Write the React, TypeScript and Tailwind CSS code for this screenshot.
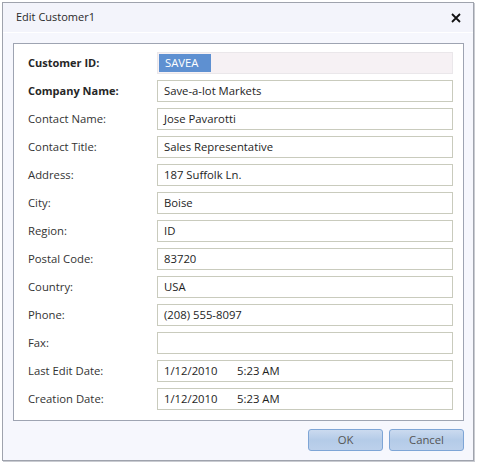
import React from "react";

const rows: { label: string; value: string; bold?: boolean; time?: string }[] = [
  { label: "Company Name:", value: "Save-a-lot Markets", bold: true },
  { label: "Contact Name:", value: "Jose Pavarotti" },
  { label: "Contact Title:", value: "Sales Representative" },
  { label: "Address:", value: "187 Suffolk Ln." },
  { label: "City:", value: "Boise" },
  { label: "Region:", value: "ID" },
  { label: "Postal Code:", value: "83720" },
  { label: "Country:", value: "USA" },
  { label: "Phone:", value: "(208) 555-8097" },
  { label: "Fax:", value: "" },
  { label: "Last Edit Date:", value: "1/12/2010", time: "5:23 AM" },
  { label: "Creation Date:", value: "1/12/2010", time: "5:23 AM" },
];

export default function App() {
  return (
    <div
      className="w-[478px] h-[466px] bg-white pt-[2px] pl-[2px] text-[11.3px] text-[#1e1e1e]"
      style={{ fontFamily: '"Open Sans", "Noto Sans", sans-serif' }}
    >
      <div className="w-[472px] h-[459px] border border-[#9fa3ad] bg-[#f6f7fd] flex flex-col shadow-[1px_1px_0_#c9cbd1]">
        <div className="h-[30px] border-b border-white bg-[#f3f4fb] flex items-center justify-between pl-[13px] pr-[12px]">
          <span className="text-[11px] text-[#2a2a2a]">Edit Customer1</span>
          <svg width="10" height="10" viewBox="0 0 10 10">
            <path d="M1 1 L9 9 M9 1 L1 9" stroke="#111" strokeWidth="1.8" fill="none" />
          </svg>
        </div>
        <div className="pl-[10px] pr-[9px] pt-[10px]">
          <div className="h-[378px] border border-[#9ea4b2] bg-white pt-[8px] pl-[14px] pr-[10px] flex flex-col gap-[6px]">
            <div className="flex items-center h-[22px]">
              <div className="w-[129px] font-bold text-[11px] text-[#262626]">Customer ID:</div>
              <div className="flex-1 h-[22px] bg-[#f6f1f4] border border-[#eae7ea] flex items-center pl-[1px]">
                <span className="bg-[#5e90d1] text-white h-[18px] w-[52px] flex items-center pl-[6px]">SAVEA</span>
              </div>
            </div>
            {rows.map((r) => (
              <div key={r.label} className="flex items-center h-[22px]">
                <div className={`w-[129px] ${r.bold ? "font-bold text-[11px] text-[#262626]" : "text-[#333]"}`}>{r.label}</div>
                <div className="flex-1 h-[22px] bg-white border border-[#c9cbbd] flex items-center pl-[6px] text-[#1e1e1e]">
                  <span className={r.time ? "w-[73px]" : ""}>{r.value}</span>
                  {r.time && <span>{r.time}</span>}
                </div>
              </div>
            ))}
          </div>
        </div>
        <div className="flex justify-end gap-[6px] pr-[9px] pt-[8px]">
          <button className="w-[75px] h-[22px] rounded-[3px] border border-[#7ea5d6] bg-gradient-to-b from-[#cbdaef] via-[#b4cbe8] to-[#bcd0eb] text-[#555] text-[11.3px] flex items-center justify-center">
            OK
          </button>
          <button className="w-[75px] h-[22px] rounded-[3px] border border-[#7ea5d6] bg-gradient-to-b from-[#cbdaef] via-[#b4cbe8] to-[#bcd0eb] text-[#555] text-[11.3px] flex items-center justify-center">
            Cancel
          </button>
        </div>
      </div>
    </div>
  );
}
